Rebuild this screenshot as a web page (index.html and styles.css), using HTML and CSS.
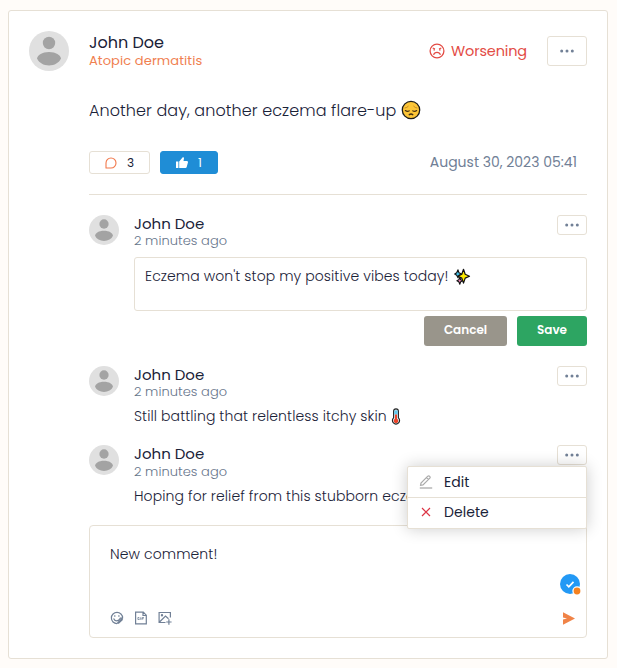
FILE: index.html
```html
<!DOCTYPE html>
<html lang="en">
<head>
<meta charset="utf-8">
<title>Journal post</title>
<link rel="stylesheet" href="styles.css">
</head>
<body>
<svg class="defs" width="0" height="0" aria-hidden="true">
  <symbol id="avatar" viewBox="0 0 40 40"><circle cx="20" cy="20" r="20" fill="#e0e0e0"/><circle cx="20" cy="12" r="6.2" fill="#a3a3a3"/><path d="M8 27.6C8.600 24 13 21 20 21s11.400 3 12 6.600C30 32 25.500 34.500 20 34.500S10 32 8 27.600z" fill="#a3a3a3"/></symbol>
  <symbol id="dots" viewBox="0 0 14 4"><g fill="#718096"><circle cx="1.700" cy="2" r="1.500"/><circle cx="7" cy="2" r="1.500"/><circle cx="12.300" cy="2" r="1.500"/></g></symbol>
</svg>
<main class="card">
  <header class="post-head">
    <svg class="avatar"><use href="#avatar"/></svg>
    <div class="who">
      <div class="post-name"><span>John Doe</span></div>
      <div class="condition"><span>Atopic dermatitis</span></div>
    </div>
    <div class="status">
      <svg width="16" height="16" viewBox="0 0 16 16" fill="none" stroke="#e34c45" stroke-width="1.300"><circle cx="8" cy="8" r="6.900"/><path d="M4.500 11.800c.6-1.700 1.900-2.500 3.500-2.500s2.900.8 3.500 2.500M3.700 5l2.300 1M12.300 5 10 6"/><path d="M5.200 6.200v1.200M10.800 6.200v1.200" stroke-width="1.500"/></svg>
      <span>Worsening</span>
    </div>
    <button class="more more-large" aria-label="More"><svg width="14" height="4"><use href="#dots"/></svg></button>
  </header>
  <section class="post-body">
    <p class="post-text"><span>Another day, another eczema flare-up</span>
      <svg width="20" height="20" viewBox="0 0 20 20"><circle cx="10" cy="10" r="8.700" fill="#fcc537" stroke="#1b1b1b" stroke-width="1.300"/><g fill="none" stroke="#453010" stroke-width="1.100" stroke-linecap="round"><path d="M4.300 10.500q2.200 1.700 4 .3M11.700 10.800q2 1.400 4-.3"/><path d="M8.300 14.600q1.700-1 3.400 0" stroke-width="1.500"/><path d="M4 8q2-.2 3.300-1.700M16 8q-2-.2-3.300-1.700" stroke="#be8520" stroke-width=".9"/></g></svg>
    </p>
    <div class="post-meta">
      <button class="pill comments"><svg width="12" height="12" viewBox="0 0 12 12" fill="none" stroke="#f2784b" stroke-width="1.100"><path d="M1 11V6a5 5 0 1 1 5 5z" stroke-linejoin="round"/></svg><span>3</span></button>
      <button class="pill likes"><svg width="12" height="12" viewBox="0 0 12 12" fill="#fff"><path d="M0 4.500h2.400V11H0zM3.200 4.600 6.500.5c.7-.8 1.700-.2 1.500.8L7.500 4h3.400c.8 0 1.200.6 1.100 1.300l-1.300 4.800c-.2.600-.6.900-1.200.9H3.200z"/></svg><span>1</span></button>
      <time>August 30, 2023 05:41</time>
    </div>
    <div class="comment editing">
      <svg class="avatar avatar-small"><use href="#avatar"/></svg>
      <div class="comment-main">
        <div class="comment-head"><div><div class="name"><span>John Doe</span></div><div class="ago"><span>2 minutes ago</span></div></div><button class="more" aria-label="More"><svg width="14" height="4"><use href="#dots"/></svg></button></div>
        <div class="edit-box"><span>Eczema won't stop my positive vibes today!</span>
          <svg width="17" height="17" viewBox="0 0 17 17" stroke="#111" stroke-linejoin="round"><path d="M4 1.800 5 4.800 7.600 6 5 7.200 4 9.800 2.700 7.200.7 6l2-1.200z" fill="#45c8f0" stroke-width="1.100"/><path d="m5.800 9.500.9 2.300 2 1-2 1-.9 2.400-1-2.400-1.900-1 1.900-1z" fill="#f58bbd" stroke-width="1.100"/><path d="m9.500 1.300 1.700 5 4.300 1.900-4.300 1.900-1.700 5-1.700-5-3.900-1.900 3.900-1.900z" fill="#ffec00" stroke-width="1.200"/></svg>
        </div>
        <div class="actions"><button class="btn cancel"><span>Cancel</span></button><button class="btn save"><span>Save</span></button></div>
      </div>
    </div>
    <div class="comment second">
      <svg class="avatar avatar-small"><use href="#avatar"/></svg>
      <div class="comment-main">
        <div class="comment-head"><div><div class="name"><span>John Doe</span></div><div class="ago"><span>2 minutes ago</span></div></div><button class="more" aria-label="More"><svg width="14" height="4"><use href="#dots"/></svg></button></div>
        <p class="comment-text"><span>Still battling that relentless itchy skin</span>
          <svg width="10" height="17" viewBox="0 0 10 17"><path d="M2.600 3.300a2.400 2.400 0 0 1 4.800 0v6.500a3.600 3.600 0 1 1-4.800 0z" fill="#d9eef3" stroke="#222" stroke-width="1.100"/><path d="M3.300 2.500h3.400v4H3.300z" fill="#62c8ed"/><path d="M4 6.500h2v4.200a2.300 2.300 0 1 1-2 0z" fill="#ed4329"/></svg>
        </p>
      </div>
    </div>
    <div class="comment third">
      <svg class="avatar avatar-small"><use href="#avatar"/></svg>
      <div class="comment-main">
        <div class="comment-head"><div><div class="name"><span>John Doe</span></div><div class="ago"><span>2 minutes ago</span></div></div>
          <div class="menu-anchor"><button class="more" aria-label="More"><svg width="14" height="4"><use href="#dots"/></svg></button>
            <div class="menu">
              <div class="menu-item"><svg width="14" height="14" viewBox="0 0 14 14" fill="none" stroke="#aaa" stroke-width="1.200"><path d="M1.600 10.200 2 8 8.800 1.200q1-.8 1.900.1t.1 1.900L4 9.900zM7.500 2.600l2 2"/><path d="M.8 13h12.400" stroke-width="1.300"/></svg><span>Edit</span></div>
              <div class="menu-item"><svg width="14" height="14" viewBox="0 0 14 14" stroke="#dc3545" stroke-width="1.200"><path d="m3 3 8 8M11 3l-8 8"/></svg><span>Delete</span></div>
            </div>
          </div>
        </div>
        <p class="comment-text"><span>Hoping for relief from this stubborn ecze</span></p>
      </div>
    </div>
    <div class="composer">
      <div class="draft"><span>New comment!</span></div>
      <svg class="checker" width="22" height="22" viewBox="0 0 22 22"><circle cx="10" cy="10" r="10" fill="#2399f5"/><path d="m6.500 10.500 2.300 2.300 4.700-5" fill="none" stroke="#fff" stroke-width="1.700"/><circle cx="17" cy="17" r="4.700" fill="#fff"/><circle cx="17" cy="17" r="3.400" fill="#f58220"/></svg>
      <div class="tools">
        <svg width="14" height="14" viewBox="0 0 14 14" fill="none" stroke="#718096" stroke-width="1.200"><path d="M7 12.600A5.600 5.600 0 1 1 12.600 7L7 12.600"/><path d="M3.600 7.500q.8 2.300 3.200 2.300 2.500-.2 3.500-2.600h2"/><path d="M4.800 4.300v1.500M8.900 4.300v1.500"/><path d="m8 12.400 4.500-4.300" stroke-width="1.800"/></svg>
        <svg width="14" height="14" viewBox="0 0 14 14" fill="none" stroke="#718096" stroke-width="1.200"><path d="M1.600 1.200h7.700l3 3v8.600H1.600zM9 1.500v3h3"/><path d="M5.300 6.500H3.900v2h1.400V7.600M6.700 6.300v2.500M8 8.800V6.600h2M8 7.700h1.600" stroke-width=".8"/></svg>
        <svg width="14" height="14" viewBox="0 0 14 14" fill="none" stroke="#718096" stroke-width="1.200"><path d="M7.500 11.500h-6.400v-10h11.300v5M1.500 11 7.500 5l3 2.800M10.900 8.300v5.400M8.200 11h5.400"/><circle cx="4" cy="4.300" r=".6"/></svg>
        <svg class="send" width="12" height="13" viewBox="0 0 12 13"><path d="M0 .3 12 6.500 0 12.700V7.500l4-1-4-1z" fill="#f08347"/></svg>
      </div>
    </div>
  </section>
</main>
</body>
</html>
```
FILE: styles.css
```css
* { box-sizing: border-box; }
body { margin: 0; padding: 10px 9px 9px 8px; background: #fffcf9; color: #1a2238; font-family: Poppins, Inter, sans-serif; font-size: 14px; }
button { font: inherit; margin: 0; padding: 0; }
p { margin: 0; }
svg { flex: none; }
span, time { white-space: nowrap; }
.defs { position: absolute; }
.card { height: 649px; padding: 20px; background: #fff; border: 1px solid #e6e0d5; border-radius: 3px; }
.post-head { display: flex; height: 40px; align-items: center; }
.avatar { width: 40px; height: 40px; }
.who { margin-left: 20px; flex: 1; }
.post-name { font-size: 16px; line-height: 20px; }
.condition { font-size: 13px; line-height: 16px; color: #f08050; letter-spacing: .1px; }
.status { display: flex; align-items: center; gap: 6px; color: #e34c45; font-size: 14.500px; letter-spacing: -.15px; margin-right: 20px; }
.more { width: 30px; height: 20px; flex: none; display: flex; align-items: center; justify-content: center; background: #fff; border: 1px solid #e6e0d5; border-radius: 3px; }
.more-large { width: 40px; height: 30px; }
.post-body { margin-left: 60px; }
.post-text { display: flex; align-items: center; gap: 5px; height: 24px; margin-top: 27px; font-size: 16px; font-weight: 300; letter-spacing: .085px; }
.post-meta { display: flex; align-items: center; height: 23px; margin-top: 29px; gap: 10px; }
.post-meta time { margin-left: auto; margin-right: 10px; color: #718096; font-size: 14px; }
.pill { height: 23px; display: flex; align-items: center; justify-content: center; gap: 10px; border: 1px solid #e6e0d5; border-radius: 3px; background: #fff; font-size: 12px; color: #1a2238; }
.comments { width: 61px; }
.likes { width: 58px; border-color: #1f8dd6; background: #1f8dd6; color: #fff; }
.comment { display: flex; height: 79px; }
.editing { border-top: 1px solid #e6e0d5; margin-top: 20px; padding-top: 20px; height: 172px; }
.third { height: 80px; }
.third .comment-head { height: 43px; }
.third .ago { margin-top: 1px; }
.avatar-small { width: 30px; height: 30px; }
.comment-main { flex: 1; margin-left: 15px; min-width: 0; }
.comment-head { display: flex; justify-content: space-between; height: 42px; }
.name { font-size: 15px; line-height: 18px; }
.ago { font-size: 13px; line-height: 16px; color: #66748a; font-weight: 300; letter-spacing: .05px; }
.edit-box { height: 54px; padding: 10px; display: flex; align-items: flex-start; gap: 5px; line-height: 17px; border: 1px solid #e6e0d5; border-radius: 3px; font-weight: 300; letter-spacing: .085px; }
.actions { display: flex; justify-content: flex-end; gap: 10px; margin-top: 5px; }
.btn { height: 30px; padding-bottom: 2px; border: 0; border-radius: 3px; color: #fff; font-size: 12px; font-weight: 600; }
.cancel { width: 83px; background: #99958b; }
.save { width: 70px; background: #2da562; }
.comment-text { display: flex; align-items: center; gap: 4px; height: 17px; font-weight: 300; letter-spacing: .1px; }
.menu-anchor { position: relative; height: 20px; }
.menu { position: absolute; z-index: 2; top: 21px; right: 0; width: 180px; background: #fff; border: 1px solid #e6e0d5; border-radius: 2px; box-shadow: 0 0 16px rgba(0, 0, 0, .2); }
.menu-item { display: flex; align-items: center; height: 30px; padding-left: 11px; gap: 11px; letter-spacing: .05px; }
.menu-item + .menu-item { height: 31px; padding-bottom: 2px; border-top: 1px solid #e6e0d5; }
.composer { display: flex; flex-direction: column; position: relative; height: 113px; border: 1px solid #e6e0d5; border-radius: 4px; padding: 20px 11px 12px 20px; font-weight: 300; letter-spacing: .1px; }
.draft { flex: 1; line-height: 17px; }
.checker { position: absolute; right: 4px; top: 48px; }
.tools { display: flex; align-items: center; gap: 10px; height: 14px; }
.send { margin-left: auto; }
```
